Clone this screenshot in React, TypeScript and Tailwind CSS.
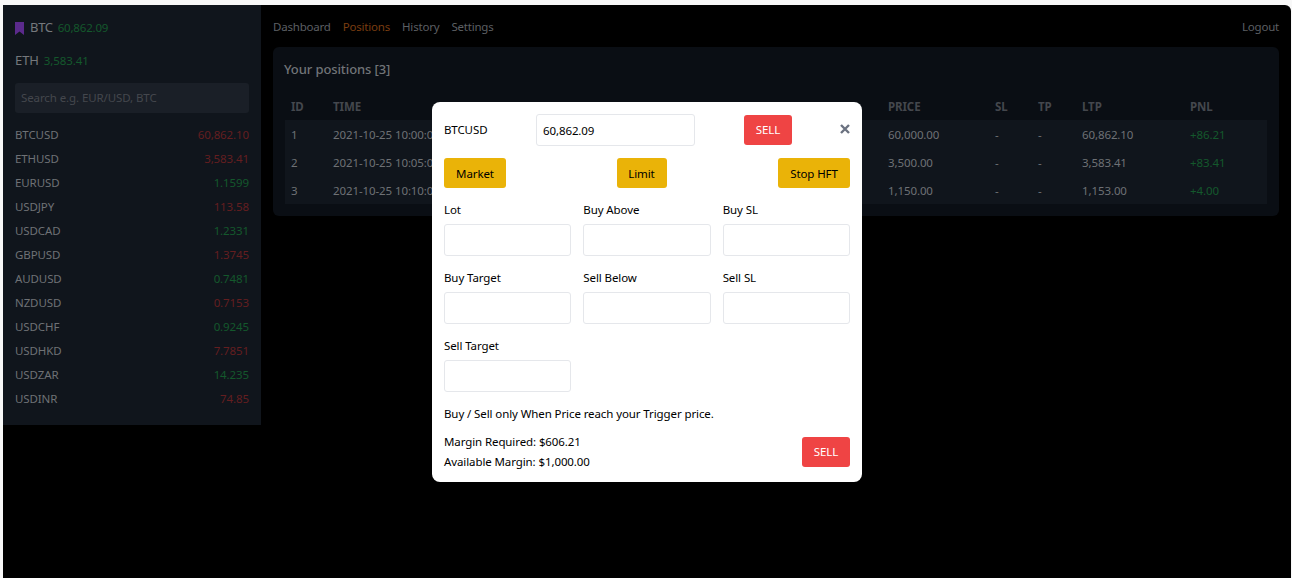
import React from "react";

const font = { fontFamily: '"Noto Sans", "Open Sans", sans-serif' };

const pairs: [string, string, boolean][] = [
  ["BTCUSD", "60,862.10", false],
  ["ETHUSD", "3,583.41", false],
  ["EURUSD", "1.1599", true],
  ["USDJPY", "113.58", false],
  ["USDCAD", "1.2331", true],
  ["GBPUSD", "1.3745", false],
  ["AUDUSD", "0.7481", true],
  ["NZDUSD", "0.7153", false],
  ["USDCHF", "0.9245", true],
  ["USDHKD", "7.7851", false],
  ["USDZAR", "14.235", true],
  ["USDINR", "74.85", false],
];

const rows = [
  ["1", "2021-10-25 10:00:00", "60,000.00", "60,862.10", "+86.21"],
  ["2", "2021-10-25 10:05:00", "3,500.00", "3,583.41", "+83.41"],
  ["3", "2021-10-25 10:10:00", "1,150.00", "1,153.00", "+4.00"],
];

function Field({ label }: { label: string }) {
  return (
    <div className="flex flex-col">
      <label className="h-[18px] leading-[18px] mb-[5px] mt-0">{label}</label>
      <input className="h-[32px] w-full rounded-[3px] border border-[#e5e7eb] bg-white" />
    </div>
  );
}

function Sidebar() {
  return (
    <aside className="w-[258px] h-[420px] shrink-0 bg-[#10151c] px-[12px] text-[#6e7175]">
      <div className="flex items-center h-[24px] mt-[11px]">
        <svg width="9" height="13" viewBox="0 0 9 13" className="mr-[6px]" fill="#5b2a8c">
          <path d="M0 0h9v13L4.5 9.5 0 13z" />
        </svg>
        <span className="text-[13px] text-[#75787c] tracking-[-0.3px]">BTC</span>
        <span className="ml-[5px] text-[11.5px] text-[#14582c] tracking-[-0.2px]">60,862.09</span>
      </div>
      <div className="flex items-center h-[24px] mt-[9px]">
        <span className="text-[13px] text-[#75787c]">ETH</span>
        <span className="ml-[5px] text-[11.5px] text-[#14582c] tracking-[-0.1px]">3,583.41</span>
      </div>
      <div className="mt-[10px] h-[30px] rounded-[3px] bg-[#1a1f27] px-[6px] flex items-center text-[#44474d]">
        Search e.g. EUR/USD, BTC
      </div>
      <ul className="mt-[10px]">
        {pairs.map(([n, v, up]) => (
          <li key={n} className="flex justify-between items-center h-[24px] pb-[1px]">
            <span className="text-[#6e7175]">{n}</span>
            <span className={up ? "text-[#14582c]" : "text-[#641e20]"}>{v}</span>
          </li>
        ))}
      </ul>
    </aside>
  );
}

function Positions() {
  return (
    <section className="rounded-[6px] bg-[#0a0e14] px-[12px] pt-[12px] pb-[12px] h-[169px]">
      <h2 className="text-[13px] leading-[22px] font-medium text-[#717478] ml-[-1px] mt-[-1px]">Your positions [3]</h2>
      <table className="mt-[14px] w-[982px] table-fixed text-[#6e7175]">
        <colgroup>
          <col className="w-[42px]" />
          <col className="w-[555px]" />
          <col className="w-[107px]" />
          <col className="w-[43px]" />
          <col className="w-[44px]" />
          <col className="w-[108px]" />
          <col className="w-[83px]" />
        </colgroup>
        <thead>
          <tr className="h-[26px] text-left text-[#44474d]">
            {["ID", "TIME", "PRICE", "SL", "TP", "LTP", "PNL"].map((h) => (
              <th key={h} className="pl-[6px] font-bold">{h}</th>
            ))}
          </tr>
        </thead>
        <tbody className="bg-[#10151c]">
          {rows.map((r) => (
            <tr key={r[0]} className="h-[28px]">
              <td className="pl-[6px] pt-[1px]">{r[0]}</td>
              <td className="pl-[6px] pt-[1px]">{r[1]}</td>
              <td className="pl-[6px] pt-[1px]">{r[2]}</td>
              <td className="pl-[6px] pt-[1px]">-</td>
              <td className="pl-[6px] pt-[1px]">-</td>
              <td className="pl-[6px] pt-[1px]">{r[3]}</td>
              <td className="pl-[6px] pt-[1px] text-[#14582c]">{r[4]}</td>
            </tr>
          ))}
        </tbody>
      </table>
    </section>
  );
}

function Modal() {
  return (
    <div className="absolute left-[432px] top-[102px] w-[430px] h-[380px] rounded-[8px] bg-white p-[12px] text-black">
      <div className="flex items-center h-[32px]">
        <span className="w-[92px]">BTCUSD</span>
        <input
          readOnly
          value="60,862.09"
          className="w-[159px] h-[32px] rounded-[3px] border border-[#e5e7eb] px-[6px] text-black"
        />
        <button className="ml-[49px] w-[48px] h-[30px] rounded-[3px] bg-[#ef4444] text-white">SELL</button>
        <svg width="10" height="10" viewBox="0 0 10 10" className="ml-auto mb-[2px]" stroke="#6b7280" strokeWidth="2.4" fill="none">
          <path d="M1 1l8 8M9 1l-8 8" />
        </svg>
      </div>
      <div className="flex justify-between mt-[12px]">
        <button className="h-[30px] w-[62px] rounded-[3px] bg-[#eab308] pt-[1px]">Market</button>
        <button className="h-[30px] w-[50px] rounded-[3px] bg-[#eab308] ml-[-1px] pt-[1px]">Limit</button>
        <button className="h-[30px] w-[72px] rounded-[3px] bg-[#eab308] pt-[1px]">Stop HFT</button>
      </div>
      <div className="grid grid-cols-3 gap-x-[12px] gap-y-[13px] mt-[13px]">
        {["Lot", "Buy Above", "Buy SL", "Buy Target", "Sell Below", "Sell SL", "Sell Target"].map((l) => (
          <Field key={l} label={l} />
        ))}
      </div>
      <p className="mt-[13px] leading-[18px]">Buy / Sell only When Price reach your Trigger price.</p>
      <div className="flex justify-between items-center mt-[9px]">
        <div className="leading-[20px]">
          <div>Margin Required: $606.21</div>
          <div>Available Margin: $1,000.00</div>
        </div>
        <button className="h-[30px] w-[48px] rounded-[3px] bg-[#ef4444] text-white">SELL</button>
      </div>
    </div>
  );
}

export default function App() {
  return (
    <div className="relative h-[578px] w-[1292px] overflow-hidden bg-[#f8f8f8] pt-[5px] pl-[3px] pr-[1px] text-[11.5px] tracking-[-0.1px]" style={font}>
      <div className="flex h-[573px] bg-black rounded-tr-[6px]">
        <Sidebar />
        <main className="flex-1 pl-[12px] pr-[12px]">
          <nav className="flex items-center h-[42px] pt-[2px] gap-[12px] tracking-[-0.2px] text-[#5c5f63]">
            <span>Dashboard</span>
            <span className="text-[#7a3d10]">Positions</span>
            <span>History</span>
            <span>Settings</span>
            <span className="ml-auto">Logout</span>
          </nav>
          <Positions />
        </main>
      </div>
      <Modal />
    </div>
  );
}
